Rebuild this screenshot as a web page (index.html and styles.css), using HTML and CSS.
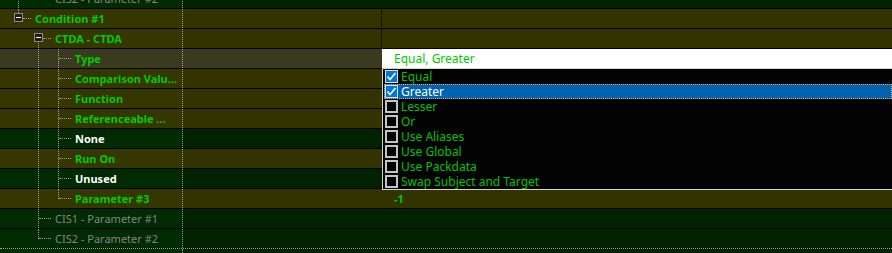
FILE: index.html
```html
<!DOCTYPE html>
<html>
<head>
  <title>Condition Editor</title>
  <link rel="stylesheet" href="styles.css">
</head>
<body>

<div class="grid">
  <div class="row green">
    <div class="name"><span class="slot pipe"></span><span class="slot elbow"></span><span class="label dim">CIS2 - Parameter #2</span></div>
    <div class="mid"></div><div class="value"></div>
  </div>
  <div class="row olive">
    <div class="name"><span class="slot node up"><i class="box"></i></span><span class="label">Condition #1</span></div>
    <div class="mid edge"></div><div class="value"></div>
  </div>
  <div class="row olive">
    <div class="name"><span class="slot"></span><span class="slot node down"><i class="box"></i></span><span class="label">CTDA - CTDA</span></div>
    <div class="mid edge"></div><div class="value"></div>
  </div>
  <div class="row sel">
    <div class="name"><span class="slot"></span><span class="slot pipe"></span><span class="slot tee"></span><span class="label">Type</span></div>
    <div class="mid"></div>
    <div class="value">
      <div class="combo">
        <div class="combo-text">Equal, Greater</div>
        <ul class="combo-list">
          <li><span class="check on"><svg width="11" height="11" viewBox="0 0 11 11"><polyline points="1.5,5.5 4,8.5 9.5,2" fill="none" stroke="#fff" stroke-width="1.6"/></svg></span>Equal</li>
          <li class="active"><span class="check on"><svg width="11" height="11" viewBox="0 0 11 11"><polyline points="1.5,5.5 4,8.5 9.5,2" fill="none" stroke="#fff" stroke-width="1.6"/></svg></span>Greater</li>
          <li><span class="check"></span>Lesser</li>
          <li><span class="check"></span>Or</li>
          <li><span class="check"></span>Use Aliases</li>
          <li><span class="check"></span>Use Global</li>
          <li><span class="check"></span>Use Packdata</li>
          <li><span class="check"></span>Swap Subject and Target</li>
        </ul>
      </div>
    </div>
  </div>
  <div class="row olive">
    <div class="name"><span class="slot"></span><span class="slot pipe"></span><span class="slot tee"></span><span class="label">Comparison Valu...</span></div>
    <div class="mid"></div><div class="value"></div>
  </div>
  <div class="row olive">
    <div class="name"><span class="slot"></span><span class="slot pipe"></span><span class="slot tee"></span><span class="label">Function</span></div>
    <div class="mid"></div><div class="value"></div>
  </div>
  <div class="row olive">
    <div class="name"><span class="slot"></span><span class="slot pipe"></span><span class="slot tee"></span><span class="label">Referenceable ...</span></div>
    <div class="mid"></div><div class="value"></div>
  </div>
  <div class="row green">
    <div class="name"><span class="slot"></span><span class="slot pipe"></span><span class="slot tee"></span><span class="label white">None</span></div>
    <div class="mid"></div><div class="value"></div>
  </div>
  <div class="row olive">
    <div class="name"><span class="slot"></span><span class="slot pipe"></span><span class="slot tee"></span><span class="label">Run On</span></div>
    <div class="mid"></div><div class="value"></div>
  </div>
  <div class="row green">
    <div class="name"><span class="slot"></span><span class="slot pipe"></span><span class="slot tee"></span><span class="label white">Unused</span></div>
    <div class="mid"></div><div class="value"></div>
  </div>
  <div class="row olive">
    <div class="name"><span class="slot"></span><span class="slot pipe"></span><span class="slot elbow"></span><span class="label">Parameter #3</span></div>
    <div class="mid"></div><div class="value"><span class="label">-1</span></div>
  </div>
  <div class="row green">
    <div class="name"><span class="slot"></span><span class="slot tee"></span><span class="label dim">CIS1 - Parameter #1</span></div>
    <div class="mid"></div><div class="value"></div>
  </div>
  <div class="row green last">
    <div class="name"><span class="slot"></span><span class="slot elbow"></span><span class="label dim">CIS2 - Parameter #2</span></div>
    <div class="mid"></div><div class="value"></div>
  </div>
  <div class="row green end">
    <div class="name"></div>
    <div class="mid"></div><div class="value"></div>
  </div>
</div>

</body>
</html>
```

FILE: styles.css
```css
body {
  margin: 0;
  background: #002200;
  font-family: 'Noto Sans', 'Open Sans', sans-serif;
  font-size: 12px;
  overflow: hidden;
  height: 253px;
}

.grid {
  margin-top: -11px;
}

.row {
  display: flex;
  height: 19px;
  border-bottom: 1px solid #000;
}

.row.last {
  border-bottom: 1px dotted #9a9a9a;
}

.row.end {
  border-bottom: none;
  height: 8px;
}

.olive { background: #333300; }
.green { background: #002200; }
.sel { background: #3a3a1e; }

.olive .name { background: #363600; }
.green .name { background: #002a00; }

.name {
  width: 174px;
  padding-left: 8px;
  display: flex;
  align-items: stretch;
  border-right: 1px dotted #9a9a9a;
  overflow: hidden;
  white-space: nowrap;
}

.mid {
  width: 199px;
}

.mid.edge {
  border-right: 1px solid #151500;
  width: 198px;
}

.value {
  flex: 1;
  position: relative;
  display: flex;
  align-items: center;
  padding-left: 12px;
}

.label {
  display: flex;
  align-items: center;
  padding-left: 7px;
  font-size: 11px;
  font-weight: bold;
  color: #00cc00;
}

.value .label {
  padding-left: 0;
}

.label.white { color: #ffffff; }
.label.dim { color: #858585; font-weight: normal; }

/* tree guides */
.slot {
  width: 20px;
  flex: none;
  position: relative;
}

.pipe::before,
.tee::before,
.elbow::before,
.node.up::before,
.node.down::before {
  content: "";
  position: absolute;
  left: 10px;
  border-left: 1px dotted #a0a0a0;
}

.pipe::before,
.tee::before {
  top: 0;
  bottom: 0;
}

.elbow::before,
.node.up::before {
  top: 0;
  height: 10px;
}

.node.down::before {
  top: 10px;
  bottom: 0;
}

.tee::after,
.elbow::after,
.node::after {
  content: "";
  position: absolute;
  left: 11px;
  top: 9px;
  width: 12px;
  border-top: 1px dotted #a0a0a0;
}

.node::after {
  left: 15px;
  width: 8px;
}

.box {
  position: absolute;
  left: 6px;
  top: 4px;
  width: 7px;
  height: 7px;
  border: 1px solid #8a8a8a;
  background: #1c1c1c;
  z-index: 1;
}

.box::after {
  content: "";
  position: absolute;
  left: 1px;
  top: 3px;
  width: 5px;
  height: 1px;
  background: #fff;
}

/* dropdown */
.combo {
  position: absolute;
  top: 0;
  left: 0;
  right: 0;
  z-index: 5;
}

.combo-text {
  height: 19px;
  line-height: 19px;
  background: #fff;
  color: #00c800;
  padding-left: 12px;
}

.combo-list {
  list-style: none;
  margin: 0;
  padding: 0 0 0 1px;
  background: #030303;
  border: 1px solid #d4d4d4;
  border-right: none;
}

.combo-list li {
  height: 15px;
  display: flex;
  align-items: center;
  color: #00c400;
  line-height: 15px;
}

.combo-list li.active {
  background: #0063b1;
  color: #fff;
  outline: 1px dotted #f0a050;
  outline-offset: -1px;
}

.check {
  width: 13px;
  height: 13px;
  margin: 0 3px 0 1px;
  box-sizing: border-box;
  border: 2px solid #c4c4c4;
  background: #000;
  display: flex;
  align-items: center;
  justify-content: center;
  flex: none;
}

.check.on {
  background: #0078d7;
  border: 1px solid #cfe4f7;
}
```
